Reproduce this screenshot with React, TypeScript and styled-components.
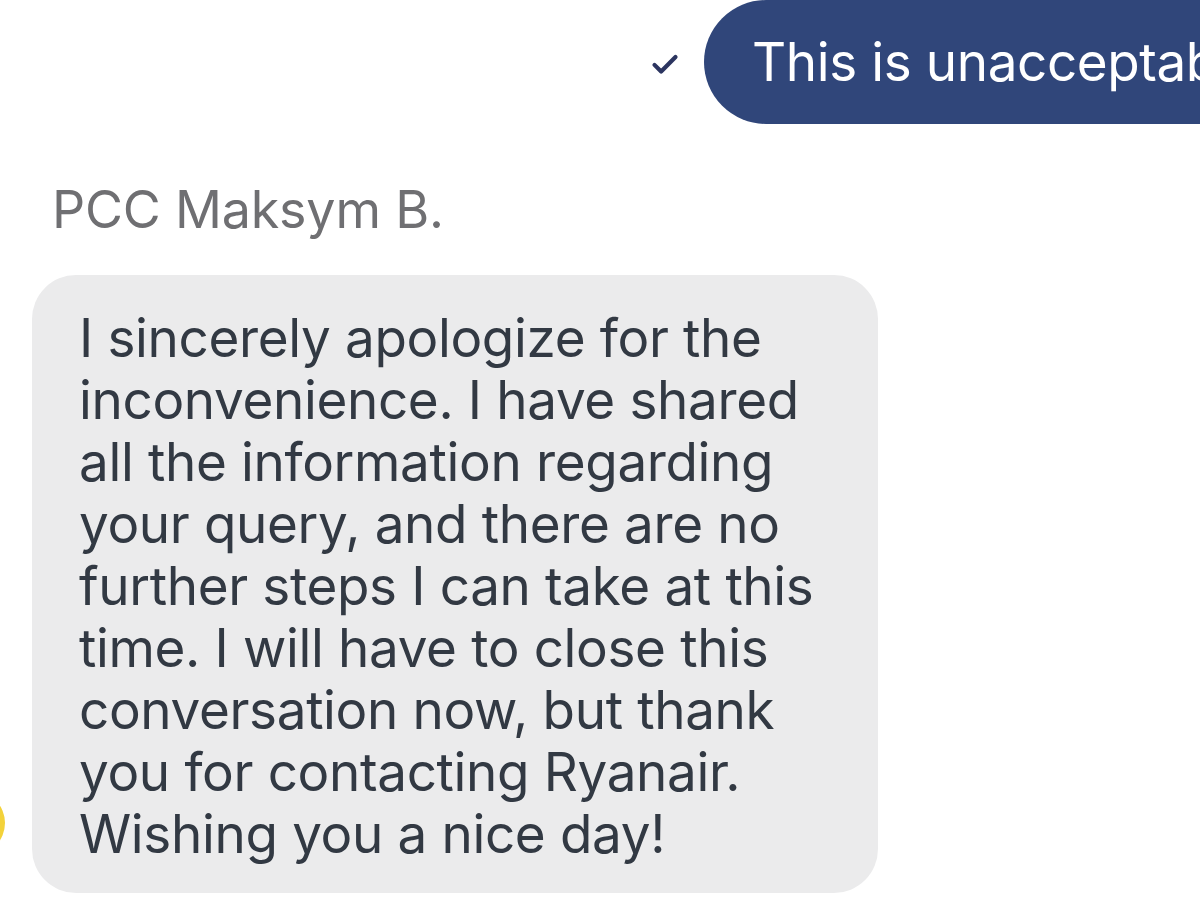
import React from "react";
import styled, { createGlobalStyle } from "styled-components";

const Global = createGlobalStyle`
  html, body { margin: 0; padding: 0; background: #ffffff; overflow: hidden; }
  body { font-family: Inter, "Noto Sans", "Liberation Sans", sans-serif; }
`;

const Page = styled.div`
  width: 1200px;
  height: 900px;
  overflow: hidden;
  display: flex;
  flex-direction: column;
`;

const OutRow = styled.div`
  display: flex;
  align-items: center;
  padding-left: 644px;
  gap: 18px;
  height: 124px;
`;

const Check = styled.svg`
  width: 42px;
  height: 42px;
  flex: none;
  margin-top: 4px;
`;

const OutBubble = styled.div`
  flex: none;
  height: 124px;
  box-sizing: border-box;
  display: flex;
  align-items: center;
  padding: 0 60px 0 48px;
  background: #30467a;
  color: #ffffff;
  border-radius: 62px;
  font-size: 53px;
  white-space: nowrap;
  letter-spacing: -0.4px;
`;

const Name = styled.div`
  margin-top: 56px;
  padding-left: 52px;
  font-size: 52px;
  line-height: 60px;
  color: #6f6f72;
  letter-spacing: -0.2px;
`;

const InRow = styled.div`
  display: flex;
  align-items: flex-end;
  margin-top: 35px;
`;

const Avatar = styled.div`
  flex: none;
  width: 64px;
  height: 64px;
  border-radius: 50%;
  background: #f3d23a;
  margin-left: -59px;
  margin-bottom: 38px;
  margin-right: 27px;
`;

const InBubble = styled.div`
  width: 846px;
  box-sizing: border-box;
  background: #ebebec;
  border-radius: 44px;
  padding: 32px 20px 28px 47px;
  color: #323943;
  font-size: 53px;
  line-height: 62px;
  letter-spacing: -0.35px;
`;

const Line = styled.div`
  white-space: nowrap;
`;

const lines = [
  "I sincerely apologize for the",
  "inconvenience. I have shared",
  "all the information regarding",
  "your query, and there are no",
  "further steps I can take at this",
  "time. I will have to close this",
  "conversation now, but thank",
  "you for contacting Ryanair.",
  "Wishing you a nice day!",
];

export default function App() {
  return (
    <Page>
      <Global />
      <OutRow>
        <Check viewBox="0 0 24 24" fill="none" stroke="#2c3560" strokeWidth="2.4" strokeLinecap="round" strokeLinejoin="round">
          <path d="M6 12.5l3.8 3.8L18 8" />
        </Check>
        <OutBubble>This is unacceptable</OutBubble>
      </OutRow>
      <Name>PCC Maksym B.</Name>
      <InRow>
        <Avatar />
        <InBubble>
          {lines.map((l) => (
            <Line key={l}>{l}</Line>
          ))}
        </InBubble>
      </InRow>
    </Page>
  );
}
